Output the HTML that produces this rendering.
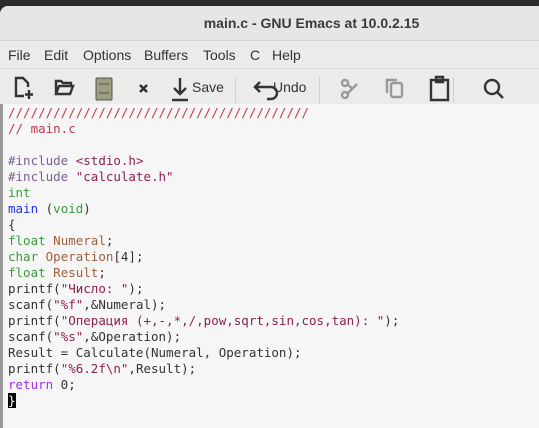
<!DOCTYPE html>
<html><head><meta charset="utf-8"><style>
body{margin:0;width:539px;height:422px;overflow:hidden;background:#2b2b2b;font-family:"Liberation Sans","DejaVu Sans",sans-serif;}
.win{position:absolute;left:0;top:6px;width:545px;height:420px;background:#ebebea;border-radius:8px 8px 0 0;}
.title{position:absolute;top:0;left:0;right:0;height:35px;line-height:35px;text-align:center;font-size:14px;color:#3a3a3a;font-weight:bold;padding-left:78px;box-sizing:border-box;background:#e6e6e5;border-bottom:1px solid #d4d4d3;border-radius:8px 8px 0 0}
.menu{position:absolute;top:36px;left:0;right:0;height:26px;font-size:14px;color:#333;}
.menu span{position:absolute;top:5px}
.tb{position:absolute;top:62px;left:0;right:0;height:36px;border-top:1px solid #dcdcdb}
.sep{position:absolute;top:8px;width:1px;height:26px;background:#d0d0d0}
.code{position:absolute;top:98px;left:0;width:539px;height:324px;background:#f6f6f6;border-left:3px solid #9a9a9a;box-sizing:border-box}
pre{margin:0;position:absolute;left:5px;top:1px;font-family:"DejaVu Sans Mono","Liberation Mono",monospace;font-size:12.5px;line-height:16px;color:#333}
.c{color:#c0394a}.p{color:#7d5e8e}.t{color:#3a9a3a}.v{color:#a0603d}.f{color:#2233ee}.s{color:#8b2252}.k{color:#a030e0}
.cur{background:#000;color:#fff}
</style></head><body>
<div class="win">
<div class="title">main.c - GNU Emacs at 10.0.2.15</div>
<div class="menu"><span style="left:8px">File</span><span style="left:44px">Edit</span><span style="left:83px">Options</span><span style="left:144px">Buffers</span><span style="left:203px">Tools</span><span style="left:250px">C</span><span style="left:272px">Help</span></div>
<div class="tb">
<svg width="539" height="36" style="position:absolute;left:0;top:0" fill="none" stroke="#333" stroke-width="2.4">
<path d="M24 27H16V9h7l5 5v4"/><path d="M29 21v9M25 25.5h8"/>
<path d="M56 25V12h5l2 2h8v3M56 25l3-8h14l-3 8z"/>
<rect x="96" y="9" width="16" height="22" rx="1" fill="#9c9c80" stroke="#555" stroke-width="1"/><path d="M99 15h10M99 24h10" stroke="#555" stroke-width="1"/>
<path d="M140 16l7 7M147 16l-7 7" stroke-width="2.6"/>
<path d="M180 9v15M174 19l6 6 6-6M172 31h16"/>
<path d="M255 18h16a6 6 0 0 1 0 12h-4M260 13l-5 5 5 5"/>
<g stroke="#999"><circle cx="345" cy="26" r="3"/><circle cx="345" cy="14" r="3"/><path d="M348 24l9-9M348 16l5 4"/><rect x="391" y="14" width="11" height="14" rx="2"/><path d="M387 24V11h10"/></g>
<path d="M431 11h17v20h-17zM436 8h7v5h-7z"/>
<circle cx="492" cy="18" r="7"/><path d="M497 23l6 6"/>
</svg>
<span style="position:absolute;left:192px;top:10px;font-size:14px;color:#333">Save</span>
<span style="position:absolute;left:273px;top:10px;font-size:14px;color:#333">Undo</span>
<div class="sep" style="left:235px"></div><div class="sep" style="left:319px"></div><div class="sep" style="left:453px"></div>
</div>
<div class="code"><pre><span class="c">////////////////////////////////////////</span>
<span class="c">// main.c</span>

<span class="p">#include</span> <span class="s">&lt;stdio.h&gt;</span>
<span class="p">#include</span> <span class="s">"calculate.h"</span>
<span class="t">int</span>
<span class="f">main</span> (<span class="t">void</span>)
{
<span class="t">float</span> <span class="v">Numeral</span>;
<span class="t">char</span> <span class="v">Operation</span>[4];
<span class="t">float</span> <span class="v">Result</span>;
printf(<span class="s">"Число: "</span>);
scanf(<span class="s">"%f"</span>,&amp;Numeral);
printf(<span class="s">"Операция (+,-,*,/,pow,sqrt,sin,cos,tan): "</span>);
scanf(<span class="s">"%s"</span>,&amp;Operation);
Result = Calculate(Numeral, Operation);
printf(<span class="s">"%6.2f\n"</span>,Result);
<span class="k">return</span> 0;
<span class="cur">}</span></pre></div>
</div>
</body></html>
